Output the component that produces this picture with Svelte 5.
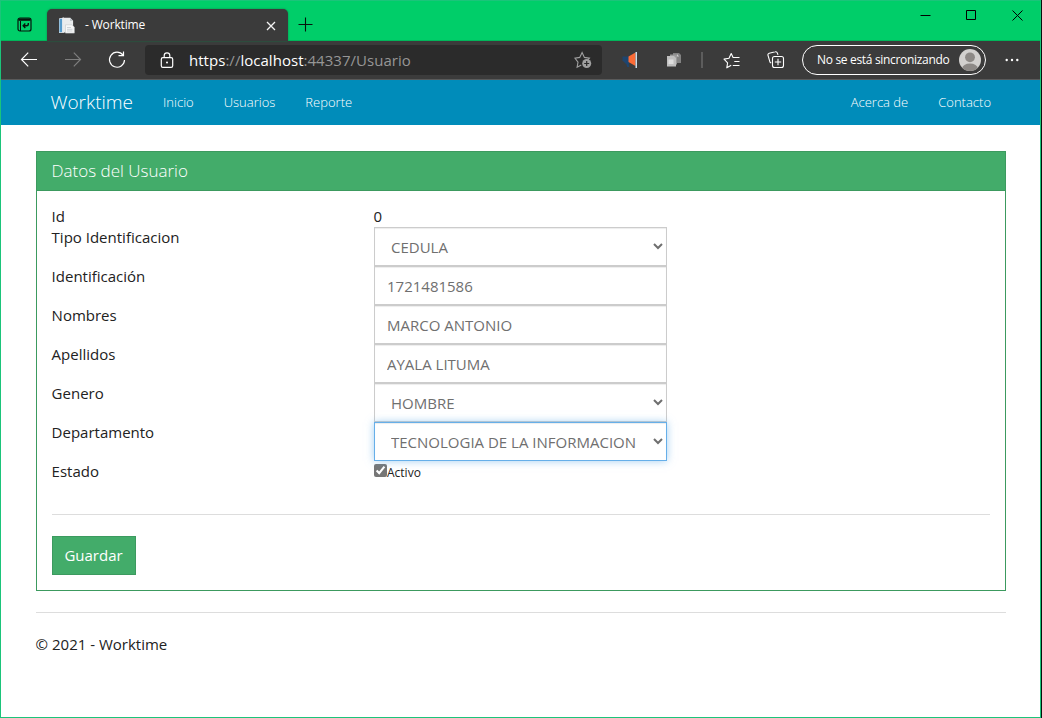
<script>
  const links = ['Inicio', 'Usuarios', 'Reporte'];
  const rightLinks = ['Acerca de', 'Contacto'];
  const fields = [
    { label: 'Tipo Identificacion', type: 'select', value: 'CEDULA' },
    { label: 'Identificación', type: 'text', value: '1721481586' },
    { label: 'Nombres', type: 'text', value: 'MARCO ANTONIO' },
    { label: 'Apellidos', type: 'text', value: 'AYALA LITUMA' },
    { label: 'Genero', type: 'select', value: 'HOMBRE' },
    { label: 'Departamento', type: 'select', value: 'TECNOLOGIA DE LA INFORMACION', active: true }
  ];
</script>

<div class="screen">
  <div class="window">
    <header class="titlebar">
      <svg class="tabs-icon" width="16" height="16" viewBox="0 0 16 16" fill="none" stroke="#06140c">
        <rect x="1" y="1" width="13" height="13" rx="2" stroke-width="1.2" />
        <path d="M1.5 2.6h12" stroke-width="2.4" />
        <path d="M3.5 4v10" stroke-width="1" />
        <path d="M11.3 6v1q0 1.8-1.8 1.8H6.4M8.3 6.6 6.2 8.8l2.1 2.1" stroke-width="1.4" />
      </svg>
      <div class="tab">
        <svg class="favicon" width="17" height="17" viewBox="0 0 17 17">
          <path d="M1 1.6 6 .6v15.2L1 16z" fill="#eef2f5" />
          <path d="M1.4 2.2 4.2 1.6v13.3l-2.8.5z" fill="#559bcb" />
          <path d="M4.5.8h7.8l2.8 3v11.6H4.5z" fill="#e9eced" />
          <path d="M12 .8v3.3h3.1z" fill="#bfc5c9" />
          <path d="M7.5 7.8h6.4l2.4 2.3v6H7.5z" fill="#f7f8f8" stroke="#c5cacd" stroke-width=".6" />
          <path d="M9 10.5h4M9 12.3h5.5M9 14h5.5" stroke="#bcc4ca" stroke-width=".7" />
        </svg>
        <span class="tab-title">- Worktime</span>
        <svg class="tab-close" width="10" height="10" viewBox="0 0 10 10" stroke="#f4f4f4" stroke-width="1.3"><path d="M1 1l8 8M9 1l-8 8" /></svg>
      </div>
      <svg class="new-tab" width="15" height="15" viewBox="0 0 15 15" stroke="#06140c"><path d="M7.5 .5v14M.5 7.5h14" stroke-width="1.1" /></svg>
      <div class="controls">
        <svg width="11" height="11" viewBox="0 0 11 11" stroke="#000"><path d="M.5 5.5h10" /></svg>
        <svg width="11" height="11" viewBox="0 0 11 11" stroke="#000" fill="none"><path d="M.5 .5h9v9h-9z" /></svg>
        <svg width="11" height="11" viewBox="0 0 11 11" stroke="#000"><path d="M.5 .5l10 10M10.5 .5l-10 10" /></svg>
      </div>
    </header>

    <div class="toolbar">
      <svg width="18" height="16" viewBox="0 0 18 16" fill="none" stroke="#fff" stroke-width="1.2"><path d="M17 7.5H1.5M8.2 .7 1.5 7.5l6.7 6.8" /></svg>
      <svg class="forward" width="18" height="16" viewBox="0 0 18 16" fill="none" stroke="#7e7e7e" stroke-width="1.2"><path d="M1 7.5h15.5M9.8 .7 16.5 7.5l-6.7 6.8" /></svg>
      <svg class="reload" width="18" height="18" viewBox="0 0 18 18" fill="none" stroke="#fff" stroke-width="1.2"><path d="M15 4.2A7.5 7.5 0 1 0 16.5 9M10.5 4.6h5V.5" /></svg>
      <div class="address">
        <svg width="14" height="17" viewBox="0 0 14 17" fill="none" stroke="#fff" stroke-width="1.2">
          <rect x="1.3" y="5.6" width="11.4" height="9.8" rx="1.6" />
          <path d="M4.2 5.5V3.6a2.8 2.8 0 0 1 5.6 0v1.9" /><circle cx="7" cy="10.5" r="1" fill="#fff" stroke="none" />
        </svg>
        <span class="url">https<i>://</i>localhost<i>:44337/Usuario</i></span>
        <svg class="star" width="18" height="18" viewBox="0 0 18 18" fill="none" stroke="#a0a0a0" stroke-width="1.1">
          <path d="m7.3 14-4.2 2.3.9-5.1L.9 7.1l4.8-.7L8.1 1.5l2.3 4.9 5 .7-1.5 1.6" />
          <circle cx="12.7" cy="12.5" r="4.5" fill="#a0a0a0" stroke="none" /><path d="M12.7 10v5M10.2 12.5h5" stroke="#2b2b2b" stroke-width="1.2" />
        </svg>
      </div>
      <svg class="horn" width="16" height="18" viewBox="0 0 16 18">
        <path d="M.5 5.5h6.5V13H4L.5 9.5z" fill="#1e456f" /><path d="m4 12 1.2 4h2L6.4 12z" fill="#1e456f" />
        <path d="m6.5 5.5 7-4v13.5L6.5 11z" fill="#fb6b36" /><path d="M13.5 1h1.5v16h-1.5z" fill="#c9dbe7" />
      </svg>
      <svg class="stack" width="16" height="16" viewBox="0 0 16 16">
        <path d="M7 1h6l2 2v8H7z" fill="#828282" /><path d="M4 2.5h7v10H4z" fill="#9a9a9a" />
        <path d="M1 4h7l2 2v8.5H1z" fill="#bfbfbf" /><path d="M2.5 7.5h5v4.5h-5z" fill="#dedede" /><path d="M11 2v2.5h2z" fill="#d0d0d0" />
      </svg>
      <span class="divider"></span>
      <svg class="favorites" width="18" height="17" viewBox="0 0 18 17" fill="none" stroke="#fff" stroke-width="1.1" stroke-linejoin="round">
        <path d="m8.2 13.3-4.4 2.5.8-5L1 7.1l5-.8L8.2 1.5l1.9 4h6.4M11.3 9.5h5.2M9.8 13.5h6.7" />
      </svg>
      <svg class="collections" width="18" height="18" viewBox="0 0 18 18" fill="none" stroke="#fff" stroke-width="1.1">
        <path d="M4.2 12.2 3 11.2 1 4.4a1.7 1.7 0 0 1 1.2-2.1l6-1.5a1.7 1.7 0 0 1 2.1 1.1l.7 2" />
        <rect x="5.5" y="5.5" width="11" height="11" rx="2" /><path d="M11 7.8v6.4M7.8 11h6.4" />
      </svg>
      <div class="profile">
        <span>No se está sincronizando</span>
        <svg width="22" height="22" viewBox="0 0 22 22">
          <defs><clipPath id="face"><circle cx="11" cy="11" r="11" /></clipPath></defs>
          <g clip-path="url(#face)"><path d="M0 0h22v22H0z" fill="#d2d0ce" /><circle cx="11" cy="8.3" r="4.9" fill="#8d8986" /><ellipse cx="11" cy="19.5" rx="7.8" ry="5" fill="#8d8986" /></g>
        </svg>
      </div>
      <svg class="more" width="14" height="4" viewBox="0 0 14 4" fill="#fff"><circle cx="1.7" cy="2" r="1.2" /><circle cx="7" cy="2" r="1.2" /><circle cx="12.3" cy="2" r="1.2" /></svg>
    </div>

    <nav>
      <a class="brand" href="#inicio">Worktime</a>
      {#each links as link}<a href="#{link}">{link}</a>{/each}
      <div class="right">
        {#each rightLinks as link}<a href="#{link}">{link}</a>{/each}
      </div>
    </nav>

    <main>
      <section class="panel">
        <h3>Datos del Usuario</h3>
        <div class="panel-body">
          <div class="row id-row"><span>Id</span><span>0</span></div>
          {#each fields as field}
            <div class="row">
              <span>{field.label}</span>
              {#if field.type === 'select'}
                <select class:active={field.active}><option>{field.value}</option></select>
              {:else}
                <input type="text" value={field.value} />
              {/if}
            </div>
          {/each}
          <div class="row state"><span>Estado</span><label><input type="checkbox" checked /><span>Activo</span></label></div>
          <hr />
          <button>Guardar</button>
        </div>
      </section>
      <hr />
      <footer>© 2021 - Worktime</footer>
    </main>
  </div>
</div>

<style>
  :global(body) { margin: 0; }
  .screen { width: 1042px; height: 718px; background: #08110d; overflow: hidden; }
  .screen, .screen * { box-sizing: border-box; }
  .window {
    width: 1041px; height: 718px; background: #fff; border: 1px solid #1bc47a; display: flex; flex-direction: column;
    font: 15px/21px "Open Sans", sans-serif; color: #222;
  }
  svg { display: block; flex: none; }
  .titlebar { height: 40px; flex: none; background: #00ce69; display: flex; box-shadow: inset 0 -1px #00b65a; }
  .tabs-icon { margin: 16px 0 0 16px; }
  .tab { position: relative; width: 241px; height: 32px; margin: 8px 0 0 14px; background: #3b3b3b; border-radius: 5px 5px 0 0; display: flex; align-items: center; box-shadow: 0 0 2px #087e44; }
  .favicon { margin-left: 11px; }
  .tab-title { margin-left: 10px; color: #fff; font: 12px/16px "Open Sans", sans-serif; letter-spacing: -.15px; }
  .tab-close { margin: 1px 12px 0 auto; }
  .new-tab { margin: 16px 0 0 10px; }
  .controls { display: flex; gap: 35px; margin: 9px 17px 0 auto; }
  .toolbar { height: 39px; flex: none; background: #3b3b3b; border-bottom: 1px solid #5a5a5a; display: flex; align-items: center; padding-left: 19px; }
  .forward { margin-left: 26px; }
  .reload { margin-left: 26px; }
  .address { width: 457px; height: 30px; margin-left: 19px; background: #2b2b2b; border-radius: 4px; display: flex; align-items: center; padding: 0 10px 0 15px; }
  .url { margin-left: 15px; color: #fff; font: 15px/20px "Open Sans", sans-serif; white-space: nowrap; letter-spacing: .03px; }
  .url i { font-style: normal; color: #969696; }
  .star { margin-left: auto; }
  .horn { margin-left: 20px; }
  .stack { margin-left: 28px; }
  .divider { width: 2px; height: 16px; background: #5d5d5d; margin-left: 19px; }
  .favorites { margin-left: 20px; }
  .collections { margin-left: 26px; }
  .profile { width: 184px; height: 30px; border: 1px solid #fff; border-radius: 15px; margin-left: 17px; display: flex; align-items: center; justify-content: space-between; padding: 0 4px 0 14px; color: #fff; font: 12px/16px "Open Sans", sans-serif; letter-spacing: -.32px; white-space: nowrap; }
  .more { margin-left: 19px; }
  nav { height: 45px; flex: none; background: #008cba; display: flex; align-items: center; padding: 0 34px 0 34.5px; }
  nav a { color: #fff; text-decoration: none; font-size: 13px; font-weight: 350; padding: 0 15px; }
  nav .brand { font-size: 19px; font-weight: 300; }
  .right { margin-left: auto; display: flex; }
  main { padding: 26px 34px 0 35px; }
  .panel { border: 1px solid #3c9a5f; height: 440px; }
  h3 { margin: 0; height: 39px; padding: 8px 14.6px 0; background: #43ac6a; border-bottom: 1px solid #3c9a5f; font-size: 17px; line-height: 21px; font-weight: 300; color: #fff; }
  .panel-body { padding: 15px; }
  .row { display: grid; grid-template-columns: 322px 293px; min-height: 39px; }
  .row > span { text-indent: -.4px; }
  .id-row { min-height: 21px; }
  select, input[type="text"] {
    width: 100%; height: 39px; margin: 0; padding: 8px 12px; border: 1px solid #ccc; border-radius: 0; background-color: #fff;
    color: #6f6f6f; font: 15px/21px "Open Sans", sans-serif; box-shadow: inset 0 1px 1px rgba(0,0,0,.075); outline: none;
  }
  select.active { position: relative; border-color: #66afe9; box-shadow: inset 0 1px 1px rgba(0,0,0,.075), 0 0 8px rgba(102,175,233,.6); }
  .state { min-height: 32px; }
  .state label { display: flex; font-size: 12px; }
  .state input { width: 13px; height: 13px; margin: 3px 0 0; accent-color: #767676; }
  .state label span { line-height: 23px; }
  hr { border: 0; border-top: 1px solid #ddd; margin: 21px 0; }
  button { display: block; width: 84px; height: 39px; margin: 0; padding: 0 1px 0 0; background: #43ac6a; border: 1px solid #3c9a5f; color: #fff; font: 15px/21px "Open Sans", sans-serif; }
  footer { text-indent: -.4px; }
</style>
